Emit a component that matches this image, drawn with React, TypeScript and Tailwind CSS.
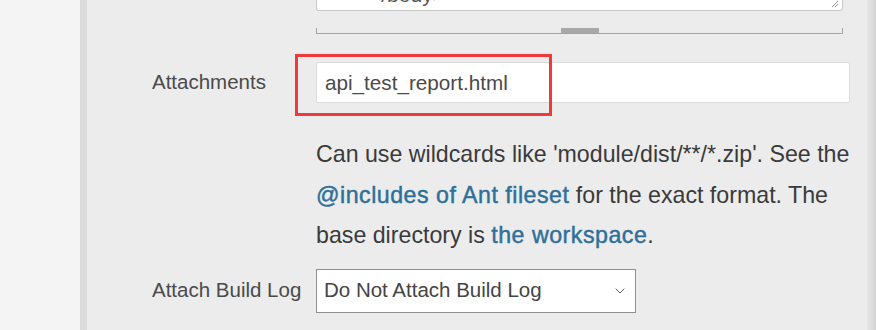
import { ChevronDown } from 'lucide-react'

const font = { fontFamily: '"Liberation Sans", Arial, sans-serif' }

function Row({ label, children, className = '' }: { label: string; children: React.ReactNode; className?: string }) {
  return (
    <div className={`flex items-center ${className}`}>
      <div className="w-[164px] shrink-0 text-[20.5px] text-[#4a4a4a]">{label}</div>
      <div className="flex-1">{children}</div>
    </div>
  )
}

export default function App() {
  return (
    <div className="flex h-[330px] w-[876px] overflow-hidden bg-[#ececec]" style={font}>
      {/* left nav strip */}
      <div className="w-[80px] shrink-0 bg-[#f4f4f4]" />
      <div className="w-[7px] shrink-0 bg-[#dcdcdc]" />

      <div className="relative flex-1 pl-[65px] pr-[17px]">
        {/* bottom of the textarea above */}
        <div className="ml-[164px] mr-[7px]">
          <div className="relative h-[11px] overflow-hidden rounded-b-[3px] border border-t-0 border-[#c9c9c9] bg-white">
            <div className="-mt-[17px] pl-[52px] text-[21px] leading-[24px] text-[#555]">&lt;/body&gt;</div>
            <svg className="absolute right-[3px] bottom-[2px]" width="8" height="8" viewBox="0 0 8 8">
              <path d="M1 7L7 1M4 7L7 4" stroke="#999" strokeWidth="1" />
            </svg>
          </div>
          {/* resize bar */}
          <div className="relative mt-[17px] h-[6px] border-x border-b border-[#a3a3a3]">
            <div className="absolute left-1/2 top-0 h-[5px] w-[38px] -translate-x-1/2 bg-[#a8a8a8]" />
          </div>
        </div>

        <Row label="Attachments" className="mt-[28px]">
          <div className="relative">
            <div className="flex h-[41px] items-center rounded-[2px] border border-[#dcdcdc] bg-white pl-[8px] text-[20.7px] text-[#4a4a4a]">
              api_test_report.html
            </div>
            <div className="absolute -left-[21px] -top-[8px] h-[62px] w-[257px] border-[3px] border-[#f0393b]" />
          </div>
        </Row>

        <div className="ml-[164px] mt-[31px] whitespace-nowrap text-[23.2px] leading-[40.5px] text-[#3a3a3a]">
          Can use wildcards like 'module/dist/**/*.zip'. See the
          <br />
          <span className="tracking-[0.5px] text-[#2f6f99] [-webkit-text-stroke:0.45px_#2f6f99]">@includes of Ant fileset</span> for the exact format. The
          <br />
          base directory is <span className="tracking-[0.5px] text-[#2f6f99] [-webkit-text-stroke:0.45px_#2f6f99]">the workspace</span>.
        </div>

        <Row label="Attach Build Log" className="mt-[13px]">
          <div className="flex h-[44px] w-[320px] items-center justify-between border border-[#8f8f8f] bg-white pl-[7px] pr-[7px] text-[20.5px] text-[#444]">
            <span>Do Not Attach Build Log</span>
            <ChevronDown size={16} strokeWidth={1.5} color="#555" />
          </div>
        </Row>
      </div>

      {/* right edge shadow */}
      <div className="w-[9px] shrink-0 bg-gradient-to-r from-[#e6e6e6] to-[#d4d4d4]" />
    </div>
  )
}
